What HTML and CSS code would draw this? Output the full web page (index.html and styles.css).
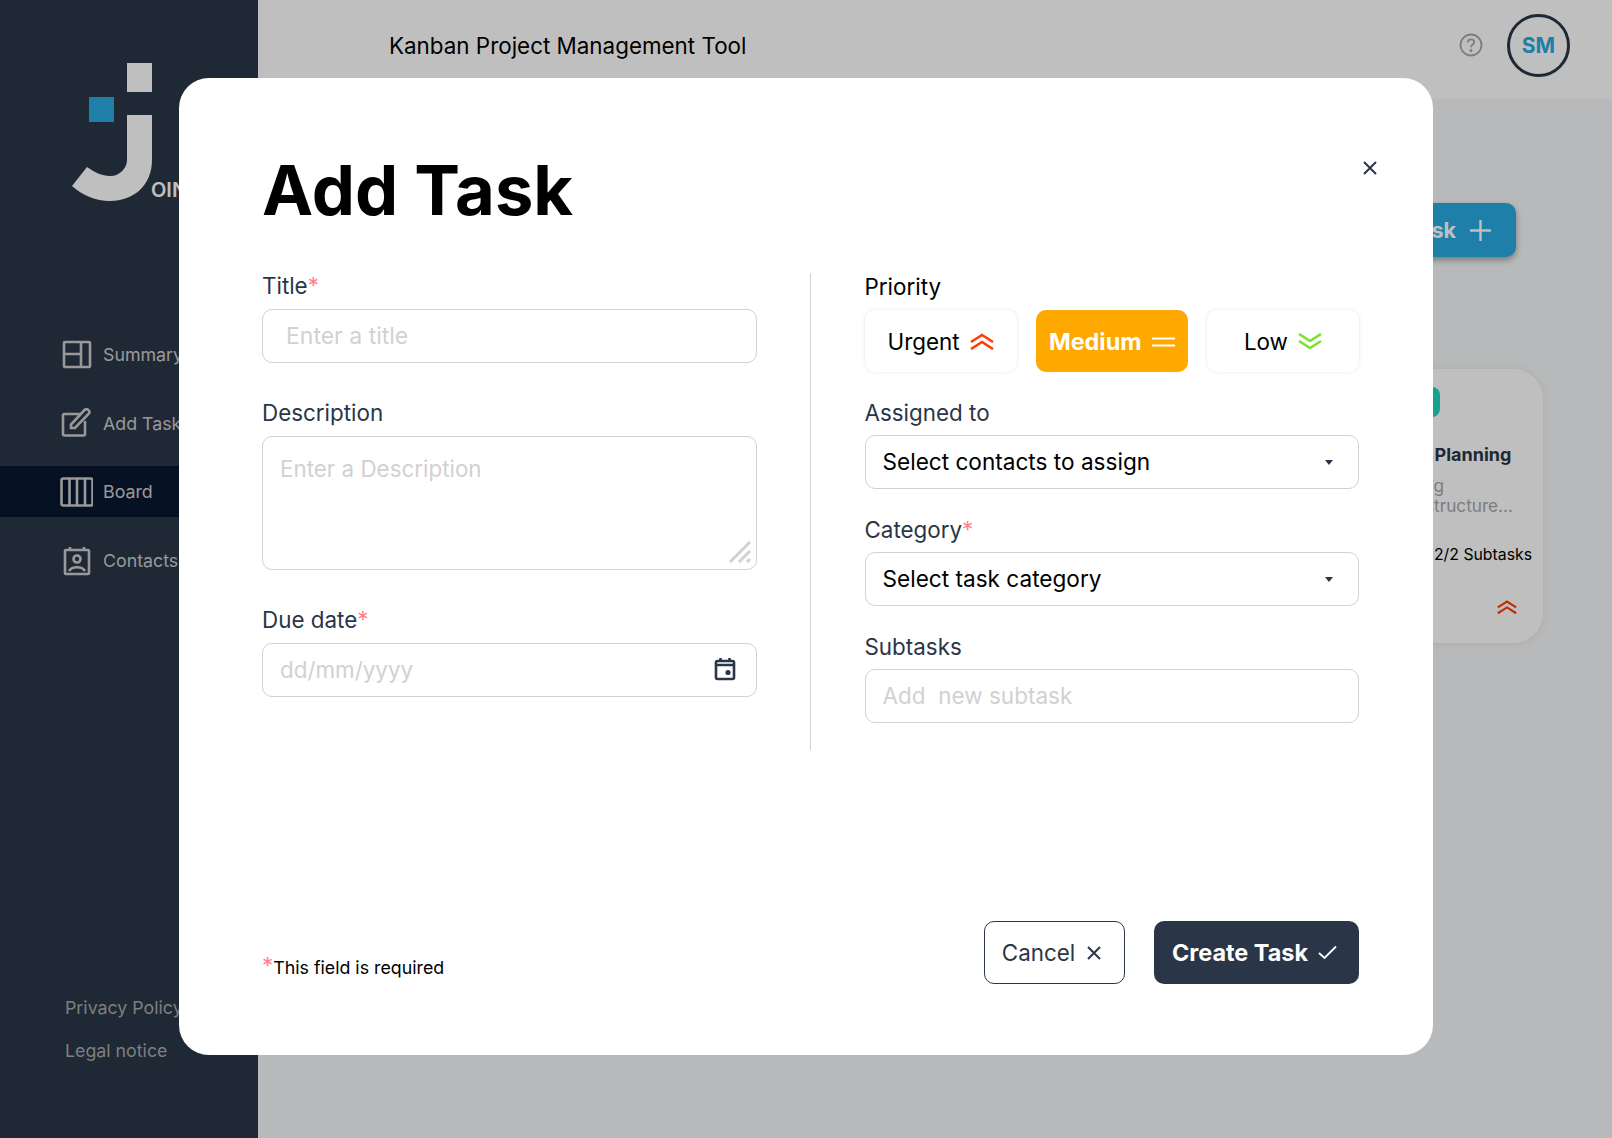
FILE: index.html
```html
<!DOCTYPE html>
<html lang="en">
<head>
    <meta charset="UTF-8">
    <title>Kanban Project Management Tool</title>
    <link rel="stylesheet" href="styles.css">
</head>
<body>
    <div class="app">
        <aside class="sidebar">
            <div class="logo">
                <svg width="120" height="152" viewBox="0 0 120 152">
                    <rect x="67" y="13" width="25" height="29" fill="#fff"/>
                    <rect x="29" y="47" width="25" height="25" fill="#29ABE2"/>
                    <path d="M67 65H92V110C92 135 74 151 50 151C36 151 22 145 12 136L27 117C34 122 42 126 50 126C60 126 67 118 67 110Z" fill="#fff"/>
                </svg>
                <span class="logo-text">OIN</span>
            </div>
            <nav class="side-nav">
                <a href="#summary" class="side-link">
                    <svg class="side-icon" width="34" height="30" viewBox="0 0 34 30" fill="none" stroke="currentColor" stroke-width="2.600"><rect x="5" y="2" width="26" height="25" rx="1"/><path d="M22 2V27M5 14H22"/></svg>
                    Summary
                </a>
                <a href="#add" class="side-link">
                    <svg class="side-icon" width="34" height="30" viewBox="0 0 34 30" fill="none" stroke="currentColor" stroke-width="2.600"><path d="M21 6H5.500A1.500 1.500 0 0 0 4 7.500V26A1.500 1.500 0 0 0 5.500 27.500H24.500A1.500 1.500 0 0 0 26 26V13"/><path d="M12 20V16.500L25.500 2C27.500 -.2 32 3 30 5.500L16 20Z"/></svg>
                    Add Task
                </a>
                <a href="#board" class="side-link active">
                    <svg class="side-icon" width="34" height="30" viewBox="0 0 34 30" fill="none" stroke="currentColor" stroke-width="2.600"><rect x="2.500" y="1.500" width="31" height="27" rx="2"/><path d="M10.500 1.500V28.500M18 1.500V28.500M26 1.500V28.500"/></svg>
                    Board
                </a>
                <a href="#contacts" class="side-link">
                    <svg class="side-icon" width="34" height="30" viewBox="0 0 34 30" fill="none" stroke="currentColor" stroke-width="2.600"><rect x="6" y="4" width="24" height="24" rx="1"/><path d="M11 1V4M25 1V4"/><circle cx="18" cy="13" r="3.500"/><path d="M10 25C13 20 23 20 26 25"/></svg>
                    Contacts
                </a>
            </nav>
            <div class="side-legal">
                <a href="#privacy">Privacy Policy</a>
                <a href="#legal">Legal notice</a>
            </div>
        </aside>

        <main class="main">
            <header class="topbar">
                <span class="topbar-title">Kanban Project Management Tool</span>
                <div class="topbar-right">
                    <svg width="24" height="24" viewBox="0 0 24 24" fill="none" stroke="#A8A8A8" stroke-width="1.800"><circle cx="12" cy="12" r="10.500"/><path d="M8.800 9.500C8.800 7.500 10.300 6.300 12 6.300C13.800 6.300 15.200 7.500 15.200 9.200C15.200 11.500 12 11.500 12 14.200"/><circle cx="12" cy="17.500" r=".6" fill="#A8A8A8"/></svg>
                    <div class="avatar">SM</div>
                </div>
            </header>
            <div class="toolbar">
                <button class="add-btn">Add Task
                    <svg width="23" height="23" viewBox="0 0 23 23" stroke="#fff" stroke-width="2.400"><path d="M11.500 1V22M1 11.500H22"/></svg>
                </button>
            </div>
            <div class="board">
                <article class="card">
                    <span class="card-tag">Technical Task</span>
                    <h3 class="card-title">Kanban Sprint Planning</h3>
                    <p class="card-desc">Define a backlog<br>and the folder structure...</p>
                    <div class="card-progress">
                        <span class="card-bar"></span>
                        <span>2/2 Subtasks</span>
                    </div>
                    <div class="card-foot">
                        <svg width="20" height="16" viewBox="0 0 24 17" fill="none" stroke="#FF3D00" stroke-width="2.500"><path d="M1 9L12 2L23 9M1 16L12 9L23 16"/></svg>
                    </div>
                </article>
            </div>
        </main>
    </div>

    <div class="overlay">
        <section class="modal">
            <div class="modal-head">
                <h1>Add Task</h1>
                <button class="close-btn" aria-label="Close">
                    <svg width="16" height="16" viewBox="0 0 16 16" stroke="#2A3647" stroke-width="2"><path d="M2 2L14 14M14 2L2 14"/></svg>
                </button>
            </div>

            <form class="task-form">
                <div class="col">
                    <div class="field">
                        <label>Title<span class="req">*</span></label>
                        <input class="control title-input" type="text" placeholder="Enter a title">
                    </div>
                    <div class="field">
                        <label>Description</label>
                        <div class="textarea-wrap">
                            <textarea class="control" placeholder="Enter a Description"></textarea>
                            <svg class="grip" width="22" height="22" viewBox="0 0 22 22" stroke="#D1D1D1" stroke-width="3"><path d="M1 21L21 1M10 21L21 10M18 21L21 18"/></svg>
                        </div>
                    </div>
                    <div class="field">
                        <label>Due date<span class="req">*</span></label>
                        <div class="date-wrap">
                            <input class="control" type="text" placeholder="dd/mm/yyyy">
                            <svg class="date-icon" width="22" height="24" viewBox="0 0 22 24" fill="none" stroke="#2A3647" stroke-width="2.600"><rect x="2" y="4" width="18" height="18" rx="1.500"/><path d="M2 8H20M6.500 1V4M15.500 1V4"/><circle cx="14" cy="15.500" r="2.600" fill="#2A3647" stroke="none"/></svg>
                        </div>
                    </div>
                </div>

                <div class="divider"></div>

                <div class="col col-right">
                    <div class="field field-priority">
                        <label class="label-dark">Priority</label>
                        <div class="priority">
                            <button type="button" class="prio-btn">Urgent
                                <svg width="24" height="17" viewBox="0 0 24 17" fill="none" stroke="#FF3D00" stroke-width="2.600"><path d="M1 9L12 2L23 9M1 16L12 9L23 16"/></svg>
                            </button>
                            <button type="button" class="prio-btn selected">Medium
                                <svg width="23" height="10" viewBox="0 0 23 10" stroke="#fff" stroke-width="2.200"><path d="M0 1.500H23M0 8.500H23"/></svg>
                            </button>
                            <button type="button" class="prio-btn">Low
                                <svg width="24" height="17" viewBox="0 0 24 17" fill="none" stroke="#7AE229" stroke-width="2.600"><path d="M1 1L12 8L23 1M1 8L12 15L23 8"/></svg>
                            </button>
                        </div>
                    </div>
                    <div class="field">
                        <label>Assigned to</label>
                        <div class="select-wrap">
                            <select class="control select"><option>Select contacts to assign</option></select>
                        </div>
                    </div>
                    <div class="field">
                        <label>Category<span class="req">*</span></label>
                        <div class="select-wrap">
                            <select class="control select"><option>Select task category</option></select>
                        </div>
                    </div>
                    <div class="field">
                        <label>Subtasks</label>
                        <input class="control subtask-input" type="text" placeholder="Add  new subtask">
                    </div>
                </div>
            </form>

            <div class="modal-foot">
                <p class="req-note"><span class="req">*</span>This field is required</p>
                <div class="actions">
                    <button class="btn-cancel">Cancel
                        <svg width="16" height="16" viewBox="0 0 16 16" stroke="#2A3647" stroke-width="2"><path d="M2 2L14 14M14 2L2 14"/></svg>
                    </button>
                    <button class="btn-create">Create Task
                        <svg width="19" height="15" viewBox="0 0 19 15" fill="none" stroke="#fff" stroke-width="1.800"><path d="M1 8L6.500 13L18 1.500"/></svg>
                    </button>
                </div>
            </div>
        </section>
    </div>
</body>
</html>
```

FILE: styles.css
```css
* {
    box-sizing: border-box;
}
body {
    margin: 0;
    font-family: Inter, "Noto Sans", sans-serif;
    color: #2A3647;
    overflow: hidden;
}
.app {
    display: flex;
    height: 1138px;
}

/* sidebar */
.sidebar {
    width: 258px;
    flex-shrink: 0;
    background: #2A3647;
    display: flex;
    flex-direction: column;
}
.logo {
    height: 271px;
    padding: 50px 0 0 60px;
    position: relative;
}
.logo-text {
    position: absolute;
    left: 151px;
    top: 178px;
    color: #fff;
    font-size: 20px;
    font-weight: 600;
}
.side-nav {
    display: flex;
    flex-direction: column;
    gap: 17.700px;
    margin-top: 58px;
}
.side-link {
    display: flex;
    align-items: center;
    gap: 10px;
    height: 51px;
    padding-left: 59px;
    color: #CDCDCD;
    font-size: 17.800px;
    text-decoration: none;
}
.side-link.active {
    background: #091931;
}
.side-legal {
    margin-top: auto;
    padding: 0 0 78px 65px;
    display: flex;
    flex-direction: column;
    gap: 24px;
}
.side-legal a {
    color: #A8A8A8;
    font-size: 17.800px;
    line-height: 19px;
    text-decoration: none;
}

/* page behind the dialog */
.main {
    flex: 1;
    background: #F6F7F8;
    display: flex;
    flex-direction: column;
}
.topbar {
    height: 99px;
    background: #fff;
    display: flex;
    align-items: center;
    justify-content: space-between;
    padding: 0 42px 9px 131px;
    color: #000;
}
.topbar-title {
    font-size: 22.400px;
}
.topbar-right {
    display: flex;
    align-items: center;
    gap: 24px;
}
.avatar {
    width: 63px;
    height: 63px;
    border: 3px solid #2A3647;
    border-radius: 50%;
    display: flex;
    align-items: center;
    justify-content: center;
    color: #29ABE2;
    font-size: 21px;
    font-weight: 700;
}
.toolbar {
    display: flex;
    justify-content: flex-end;
    padding: 104px 96px 0 0;
}
.add-btn {
    height: 54px;
    width: 180px;
    border: none;
    border-radius: 10px;
    background: #29ABE2;
    color: #fff;
    font: 700 21.500px Inter, sans-serif;
    display: flex;
    align-items: center;
    justify-content: flex-end;
    gap: 13px;
    padding-right: 24px;
    box-shadow: 0 3px 6px rgba(0, 0, 0, .35);
}
.board {
    display: flex;
    justify-content: flex-end;
    padding: 112px 69px 0 0;
}
.card {
    width: 252px;
    height: 274px;
    background: #fff;
    border-radius: 30px;
    padding: 18px 11px 0 16px;
    box-shadow: 0 0 10px rgba(0, 0, 0, .08);
}
.card-tag {
    display: inline-block;
    width: 133px;
    height: 30px;
    border-radius: 8px;
    background: #1FD7C1;
    color: #fff;
    font-size: 16px;
    line-height: 30px;
    text-align: center;
}
.card-title {
    margin: 27px 0 0 -2px;
    font-size: 18px;
    line-height: 22px;
    font-weight: 700;
    white-space: nowrap;
}
.card-desc {
    margin: 10px 0 0;
    color: #A8A8A8;
    font-size: 17.200px;
    line-height: 20px;
}
.card-progress {
    display: flex;
    align-items: center;
    gap: 14px;
    margin-top: 29px;
    color: #000;
    font-size: 15.800px;
    line-height: 20px;
}
.card-bar {
    flex: 1;
    height: 8px;
    border-radius: 8px;
    background: #4589FF;
}
.card-foot {
    display: flex;
    justify-content: flex-end;
    padding: 34px 15px 0 0;
}

/* dialog */
.overlay {
    position: absolute;
    inset: 0;
    background: rgba(0, 0, 0, .25);
    display: flex;
    padding: 78px 179px 83px;
}
.modal {
    flex: 1;
    min-width: 0;
    background: #fff;
    border-radius: 30px;
    padding: 0 74px 71px 84px;
    display: flex;
    flex-direction: column;
}
.modal-head {
    display: flex;
    justify-content: space-between;
    align-items: flex-start;
    height: 196px;
}
.modal-head h1 {
    margin: 72px 0 0 -1px;
    color: #000;
    font-size: 68.600px;
    line-height: 82px;
    font-weight: 700;
}
.close-btn {
    background: none;
    border: none;
    padding: 0;
    margin: 82px -19px 0 0;
    display: flex;
}
.task-form {
    display: flex;
    height: 477px;
    margin-left: -1px;
}
.col {
    width: 494.500px;
    flex-shrink: 0;
    display: flex;
    flex-direction: column;
    gap: 38px;
}
.col-right {
    gap: 29px;
    padding-top: 1px;
}
.divider {
    width: 1px;
    flex-shrink: 0;
    margin: -1px 54px 1px 53px;
    background: #D1D1D1;
}
.field {
    display: flex;
    flex-direction: column;
    gap: 11px;
}
.col-right .field {
    gap: 10px;
}
.col-right .field-priority {
    gap: 11px;
}
label {
    font-size: 22.400px;
    line-height: 24px;
}
.label-dark {
    color: #000;
}
.req {
    color: #FF8190;
}
.control {
    width: 100%;
    height: 54px;
    border: 1px solid #D1D1D1;
    border-radius: 10px;
    padding: 0 17px;
    background: #fff;
    font: 400 22.400px Inter, sans-serif;
    color: #000;
    outline: none;
}
.control::placeholder {
    color: #D1D1D1;
}
.title-input {
    padding-left: 23px;
    font-size: 23px;
}
.subtask-input {
    padding-bottom: 2px;
    font-size: 22.500px;
}
.select {
    appearance: none;
    padding-bottom: 2px;
    font-size: 22.600px;
}
.select-wrap {
    position: relative;
    display: flex;
}
.select-wrap::after {
    content: "";
    position: absolute;
    right: 26px;
    top: 25px;
    border-left: 4.500px solid transparent;
    border-right: 4.500px solid transparent;
    border-top: 5px solid #2A3647;
}
.textarea-wrap, .date-wrap {
    position: relative;
    display: flex;
}
textarea.control {
    height: 134px;
    padding-top: 18px;
    resize: none;
}
.grip {
    position: absolute;
    right: 6px;
    bottom: 7px;
}
.date-icon {
    position: absolute;
    right: 21px;
    top: 14px;
}
.date-wrap .control {
    padding-bottom: 2px;
}
.priority {
    display: flex;
    gap: 19px;
}
.prio-btn {
    flex: 1;
    height: 62px;
    border: none;
    border-radius: 10px;
    background: #fff;
    color: #000;
    font: 400 22.400px Inter, sans-serif;
    display: flex;
    align-items: center;
    justify-content: center;
    gap: 10px;
    box-shadow: 0 0 4px rgba(0, 0, 0, .1);
}
.prio-btn.selected {
    background: #FFA800;
    color: #fff;
    font-size: 23.400px;
    font-weight: 700;
    padding-top: 2px;
    box-shadow: none;
}
.modal-foot {
    margin-top: auto;
    display: flex;
    justify-content: space-between;
    align-items: flex-end;
}
.req-note {
    margin: 0 0 4px -1px;
    color: #000;
    font-size: 17.800px;
    line-height: 24px;
}
.req-note .req {
    font-size: 22.400px;
    line-height: 0;
}
.actions {
    display: flex;
    gap: 29px;
}
.actions button {
    height: 63px;
    border-radius: 10px;
    display: flex;
    align-items: center;
    justify-content: center;
}
.btn-cancel {
    width: 141px;
    gap: 11px;
    padding: 0 5px 0 0;
    background: #fff;
    border: 1px solid #2A3647;
    color: #2A3647;
    font: 400 22.400px Inter, sans-serif;
}
.btn-create {
    width: 205px;
    gap: 10px;
    padding: 0 4px 0 0;
    background: #2A3647;
    border: none;
    color: #fff;
    font: 700 23.400px Inter, sans-serif;
}
```
